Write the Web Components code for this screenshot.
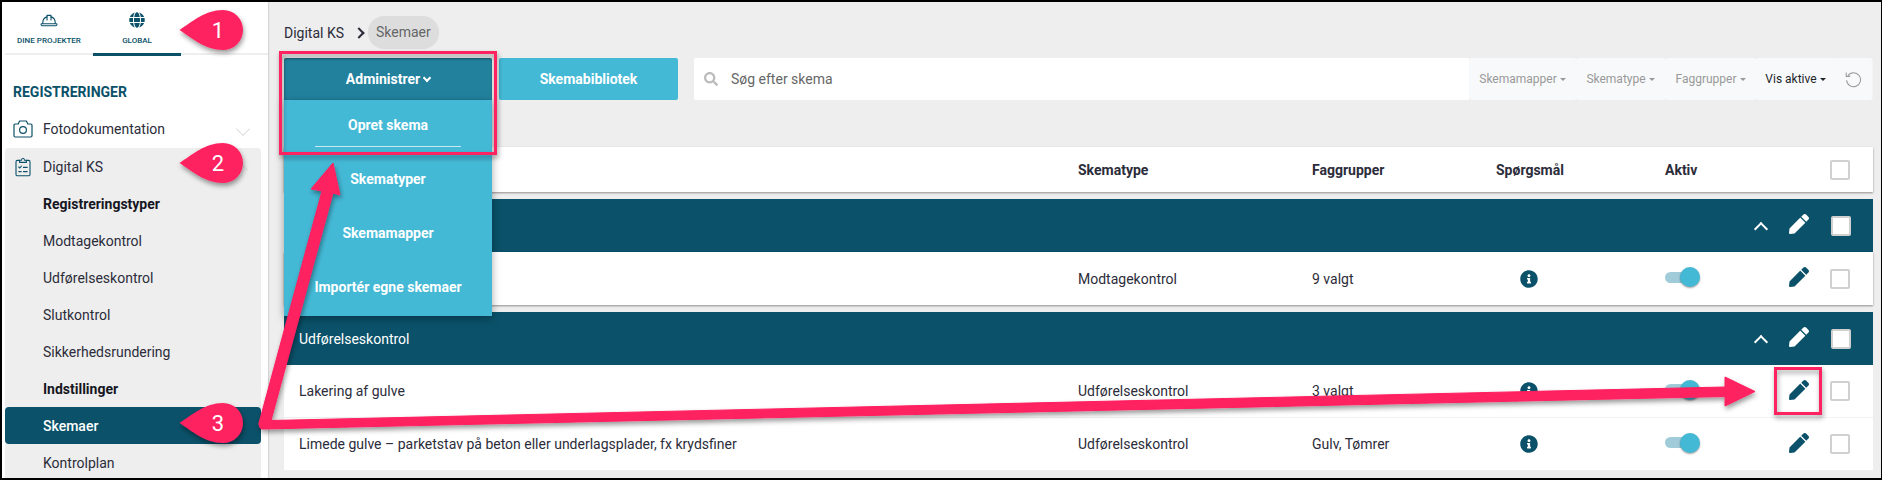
<!DOCTYPE html>
<html>
  <head>
    <meta charset="utf-8" />
    <style>
      html, body {
        margin: 0;
        height: 100%;
        overflow: hidden;
        font-family: Roboto, "Liberation Sans", sans-serif;
      }
    </style>
  </head>
  <body>
    <app-frame>
      <side-nav slot="side"></side-nav>
      <top-bar slot="main"></top-bar>
      <schema-table slot="main"></schema-table>
      <admin-menu slot="over"></admin-menu>
      <guide-marks slot="over"></guide-marks>
    </app-frame>

    <script>
      const ICONS = {
        pen: '<svg viewBox="0 0 512 512" width="20" height="20" fill="currentColor"><path d="M290.74 93.24l128.02 128.02-277.99 277.99-114.14 12.6C11.35 513.54-1.56 500.62.14 485.34l12.7-114.22 277.9-278.88zm207.2-19.06l-60.11-60.11c-18.75-18.75-49.16-18.75-67.91 0l-56.55 56.55 128.02 128.02 56.55-56.55c18.75-18.76 18.75-49.16 0-67.91z"/></svg>',
        info: '<svg viewBox="0 0 512 512" width="18" height="18" fill="currentColor"><path d="M256 8C119.043 8 8 119.083 8 256c0 136.997 111.043 248 248 248s248-111.003 248-248C504 119.083 392.957 8 256 8zm0 110c23.196 0 42 18.804 42 42s-18.804 42-42 42-42-18.804-42-42 18.804-42 42-42zm56 254c0 6.627-5.373 12-12 12h-88c-6.627 0-12-5.373-12-12v-24c0-6.627 5.373-12 12-12h12v-64h-12c-6.627 0-12-5.373-12-12v-24c0-6.627 5.373-12 12-12h64c6.627 0 12 5.373 12 12v100h12c6.627 0 12 5.373 12 12v24z"/></svg>',
        search: '<svg viewBox="0 0 512 512" width="14" height="14" fill="currentColor"><path d="M505 442.7L405.3 343c-4.5-4.5-10.6-7-17-7H372c27.6-35.3 44-79.7 44-128C416 93.1 322.9 0 208 0S0 93.1 0 208s93.1 208 208 208c48.3 0 92.7-16.4 128-44v16.3c0 6.4 2.5 12.5 7 17l99.7 99.7c9.4 9.4 24.6 9.4 33.9 0l28.3-28.3c9.4-9.4 9.4-24.6.1-34zM208 336c-70.7 0-128-57.2-128-128 0-70.7 57.2-128 128-128 70.7 0 128 57.2 128 128 0 70.7-57.2 128-128 128z"/></svg>',
        globe: '<svg viewBox="0 0 496 512" width="16" height="16" fill="currentColor"><path d="M336.5 160C322 70.7 287.8 8 248 8s-74 62.7-88.5 152h177zM152 256c0 22.2 1.2 43.5 3.3 64h185.3c2.1-20.5 3.3-41.8 3.3-64s-1.2-43.5-3.3-64H155.3c-2.1 20.5-3.3 41.8-3.3 64zm324.7-96c-28.6-67.9-86.5-120.4-158-141.6 24.4 33.8 41.2 84.7 50 141.6h108zM177.2 18.4C105.8 39.6 47.8 92.1 19.3 160h108c8.7-56.9 25.5-107.8 49.9-141.6zM487.4 192H372.7c2.1 21 3.3 42.5 3.3 64s-1.2 43-3.3 64h114.6c5.5-20.5 8.6-41.8 8.6-64s-3.1-43.5-8.5-64zM120 256c0-21.5 1.2-43 3.3-64H8.6C3.2 212.5 0 233.8 0 256s3.2 43.5 8.6 64h114.6c-2-21-3.2-42.5-3.2-64zm39.5 96c14.5 89.3 48.7 152 88.5 152s74-62.7 88.5-152h-177zm159.3 141.6c71.4-21.2 129.4-73.7 158-141.6h-108c-8.8 56.9-25.6 107.8-50 141.6zM19.3 352c28.6 67.9 86.5 120.4 158 141.6-24.4-33.8-41.2-84.7-50-141.6h-108z"/></svg>',
        helmet: '<svg viewBox="0 0 18 16" width="18" height="16" fill="none" stroke="currentColor" stroke-width="1.1" stroke-linecap="round" stroke-linejoin="round"><path d="M2.8 11.5V10.400C2.800 7.800 4.500 5.600 7 4.900M15.200 11.500V10.400c0-2.600-1.700-4.800-4.200-5.500"/><path d="M7 8V3.400h4V8"/><path d="M1.400 11.700h15.200c.5 0 .5 2-.6 2H2c-1.100 0-1.100-2-.6-2z"/></svg>',
        camera: '<svg viewBox="0 0 20 18" width="20" height="18" fill="none" stroke="currentColor" stroke-width="1.2" stroke-linejoin="round"><path d="M1 5.200c0-.7.5-1.200 1.200-1.200h3L6.600 1h6.800l1.400 3h3c.7 0 1.200.5 1.200 1.200v10.600c0 .7-.5 1.200-1.200 1.200H2.200c-.7 0-1.200-.5-1.200-1.200z"/><circle cx="10" cy="10" r="3.400"/></svg>',
        clipboard: '<svg viewBox="0 0 16 20" width="16" height="20" fill="none" stroke="currentColor" stroke-width="1.100" stroke-linejoin="round" stroke-linecap="round"><path d="M4.600 3.400H2.400c-.8 0-1.400.6-1.400 1.400v12.600c0 .8.600 1.400 1.400 1.400h11.200c.8 0 1.400-.6 1.400-1.400V4.800c0-.8-.6-1.400-1.400-1.400h-2.200"/><path d="M4.600 5.400V3.200h1.900C6.600 2 7.200 1.200 8 1.200s1.400.8 1.500 2h1.900v2.200z"/><path d="M3.800 10l1 1 1.600-1.800M8.400 10.400h3.800M3.800 14.600h2.400M8.400 14.600h3.800"/></svg>',
        reset: '<svg viewBox="0 0 18 18" width="17" height="17" fill="none" stroke="currentColor" stroke-width="1.100"><path d="M3.100 4.900A7.400 7.400 0 1 1 1.700 9.800"/><path d="M1.300 1.500v4.200h4.200" stroke-linejoin="miter"/></svg>'
      };

      class AppFrame extends HTMLElement {
        constructor() {
          super();
          this.attachShadow({ mode: "open" });
          this.shadowRoot.innerHTML = `
            <style>
              :host {
                display: block;
                position: relative;
                box-sizing: border-box;
                width: 1882px;
                height: 480px;
                border: solid #000;
                border-width: 2px 1px 2px 2px;
                overflow: hidden;
                background: #eeeeee;
              }
              .shell {
                display: grid;
                grid-template-columns: 266px 1fr;
                height: 100%;
              }
              .main {
                padding: 0 8px 0 16px;
                min-width: 0;
              }
            </style>
            <div class="shell">
              <slot name="side"></slot>
              <div class="main"><slot name="main"></slot></div>
            </div>
            <slot name="over"></slot>
          `;
        }
      }

      class SideNav extends HTMLElement {
        constructor() {
          super();
          this.attachShadow({ mode: "open" });
          this.shadowRoot.innerHTML = `
            <style>
              :host {
                display: block;
                background: #fff;
                color: #2c2c3a;
                font-size: 14px;
                overflow: hidden;
                box-shadow: 1px 0 1px rgba(0, 0, 0, 0.1);
              }
              .tabs {
                display: grid;
                grid-template-columns: 88px 88px;
                height: 51px;
                margin-left: 3px;
                border-bottom: 2px solid #eeeeee;
                color: #0a5169;
              }
              .tab {
                display: flex;
                flex-direction: column;
                align-items: center;
                padding-top: 10px;
                box-sizing: border-box;
                height: 54px;
                font-size: 8px;
                font-weight: 500;
              }
              .tab span { margin-top: 8px; }
              .tab svg { height: 16px; }
              .tab.on { border-bottom: 3px solid #0a5169; }
              h2 {
                margin: 27px 0 0 11px;
                font-size: 14px;
                line-height: 20px;
                font-weight: 700;
                color: #0a5169;
              }
              .head {
                display: flex;
                align-items: center;
                height: 37px;
                padding-left: 41px;
                position: relative;
              }
              .head svg:first-child {
                position: absolute;
                left: 11px;
                color: #0a5169;
              }
              .first { margin-top: 8px; margin-bottom: 1px; }
              .chev {
                position: absolute;
                left: 236px;
                top: 14px;
                width: 9px;
                height: 9px;
                border: solid #ddd;
                border-width: 0 1px 1px 0;
                transform: rotate(45deg);
              }
              .panel {
                margin: 0 7px 0 3px;
                background: #eeeeee;
                border-radius: 4px;
              }
              .panel .head { padding-left: 38px; }
              .panel .head svg:first-child { left: 10px; }
              .panel .chev { left: 231px; top: 17px; transform: rotate(225deg); }
              .item {
                display: flex;
                align-items: center;
                height: 37px;
                padding-left: 38px;
                border-radius: 4px;
              }
              .item.b { font-weight: 700; color: #16161f; }
              .item.on { background: #0a5169; color: #fff; font-weight: 500; }
            </style>
            <div class="tabs">
              <div class="tab">${ICONS.helmet}<span>DINE PROJEKTER</span></div>
              <div class="tab on">${ICONS.globe}<span>GLOBAL</span></div>
            </div>
            <h2>REGISTRERINGER</h2>
            <div class="head first">${ICONS.camera}Fotodokumentation<i class="chev"></i></div>
            <div class="panel">
              <div class="head">${ICONS.clipboard}Digital KS<i class="chev"></i></div>
              <div class="item b">Registreringstyper</div>
              <div class="item">Modtagekontrol</div>
              <div class="item">Udførelseskontrol</div>
              <div class="item">Slutkontrol</div>
              <div class="item">Sikkerhedsrundering</div>
              <div class="item b">Indstillinger</div>
              <div class="item on">Skemaer</div>
              <div class="item">Kontrolplan</div>
            </div>
          `;
        }
      }

      class TopBar extends HTMLElement {
        constructor() {
          super();
          this.attachShadow({ mode: "open" });
          this.shadowRoot.innerHTML = `
            <style>
              :host {
                display: block;
                color: #2c2c3a;
                font-size: 14px;
              }
              .crumbs {
                display: flex;
                align-items: center;
                height: 33px;
                padding-top: 14px;
              }
              .chev {
                width: 6px;
                height: 6px;
                margin: 0 5px 0 11px;
                border: solid #2c2c3a;
                border-width: 2px 2px 0 0;
                transform: rotate(45deg);
              }
              .pill {
                padding: 0 8px;
                line-height: 33px;
                border-radius: 16px;
                background: #dddddd;
                color: #666;
              }
              .tools {
                display: flex;
                height: 42px;
                margin-top: 9px;
              }
              .btn {
                display: flex;
                align-items: center;
                justify-content: center;
                height: 42px;
                border-radius: 2px;
                color: #fff;
                font-weight: 700;
                font-size: 14px;
                background: #44b9d6;
              }
              .library { width: 179px; margin-left: 215px; }
              .search {
                display: flex;
                align-items: center;
                gap: 13px;
                width: 765px;
                margin-left: 16px;
                padding-left: 10px;
                background: #fff;
                border-radius: 2px 0 0 2px;
                color: #bbb;
              }
              .search span { color: #666; }
              .filter {
                display: flex;
                align-items: center;
                justify-content: center;
                gap: 3px;
                background: #f8f9fa;
                color: #999;
                font-size: 12px;
                border-radius: 3px;
                box-shadow: 1px 0 0 #f2f3f4;
              }
              .filter i {
                border: solid transparent;
                border-width: 3px 3px 0;
                border-top-color: currentColor;
              }
              .filter.dark { color: #212529; }
              .reset { color: #999; border-radius: 0 3px 3px 0; }
            </style>
            <div class="crumbs">
              <span>Digital KS</span><i class="chev"></i><span class="pill">Skemaer</span>
            </div>
            <div class="tools">
              <div class="btn library">Skemabibliotek</div>
              <div class="search">${ICONS.search}<span>Søg efter skema</span></div>
              <div class="filter" style="width:107px">Skemamapper<i></i></div>
              <div class="filter" style="width:89px">Skematype<i></i></div>
              <div class="filter" style="width:91px">Faggrupper<i></i></div>
              <div class="filter dark" style="width:79px">Vis aktive<i></i></div>
              <div class="filter reset" style="width:37px">${ICONS.reset}</div>
            </div>
          `;
        }
      }

      class SchemaTable extends HTMLElement {
        constructor() {
          super();
          this.attachShadow({ mode: "open" });
          this.shadowRoot.innerHTML = `
            <style>
              :host {
                display: block;
                margin-top: 47px;
                color: #2c2c3a;
                font-size: 14px;
              }
              .row {
                display: grid;
                grid-template-columns: 779px 234px 184px 169px 124px 41px 20px;
                align-items: center;
                height: 53px;
                padding-left: 15px;
                background: #fff;
              }
              .row.top {
                height: 45px;
                font-weight: 700;
                margin-bottom: 7px;
                box-shadow: 0 1px 2px rgba(0, 0, 0, 0.4);
              }
              .row.last {
                margin-bottom: 7px;
                box-shadow: 0 1px 2px rgba(0, 0, 0, 0.4);
              }
              .row.line { border-bottom: 1px solid #f1f1f1; box-sizing: border-box; }
              .group { background: #0a5169; color: #fff; }
              .pen { color: #0a5169; height: 20px; margin-top: -3px; }
              .group .pen { color: #fff; }
              .info { color: #0a5169; margin-left: 24px; height: 18px; }
              .box {
                box-sizing: border-box;
                width: 20px;
                height: 20px;
                background: #fff;
                border: 2px solid #d0d0d0;
                border-radius: 2px;
              }
              .group .box { margin-left: 1px; }
              .updown {
                justify-self: end;
                width: 8px;
                height: 8px;
                margin: 6px 23px 0 0;
                border: solid #fff;
                border-width: 2px 0 0 2px;
                transform: rotate(45deg);
              }
              .switch {
                position: relative;
                width: 30px;
                height: 11px;
                margin-top: -3px;
                border-radius: 6px;
                background: #a0ccd9;
              }
              .switch::after {
                content: "";
                position: absolute;
                left: 15px;
                top: -4.5px;
                width: 20px;
                height: 20px;
                border-radius: 50%;
                background: #44b9d6;
                box-shadow: 0 1px 2px rgba(0, 0, 0, 0.4);
              }
            </style>
            <div class="row top">
              <span></span><span>Skematype</span><span>Faggrupper</span><span>Spørgsmål</span><span>Aktiv</span><span></span><i class="box"></i>
            </div>
            <div class="row group">
              <span></span><span></span><span></span><span></span><i class="updown"></i><span class="pen">${ICONS.pen}</span><i class="box"></i>
            </div>
            <div class="row last">
              <span></span><span>Modtagekontrol</span><span>9 valgt</span><span class="info">${ICONS.info}</span><i class="switch"></i><span class="pen">${ICONS.pen}</span><i class="box"></i>
            </div>
            <div class="row group">
              <span>Udførelseskontrol</span><span></span><span></span><span></span><i class="updown"></i><span class="pen">${ICONS.pen}</span><i class="box"></i>
            </div>
            <div class="row line">
              <span>Lakering af gulve</span><span>Udførelseskontrol</span><span>3 valgt</span><span class="info">${ICONS.info}</span><i class="switch"></i><span class="pen">${ICONS.pen}</span><i class="box"></i>
            </div>
            <div class="row line">
              <span>Limede gulve – parketstav på beton eller underlagsplader, fx krydsfiner</span><span>Udførelseskontrol</span><span>Gulv, Tømrer</span><span class="info">${ICONS.info}</span><i class="switch"></i><span class="pen">${ICONS.pen}</span><i class="box"></i>
            </div>
          `;
        }
      }

      // open dropdown, hangs over the table
      class AdminMenu extends HTMLElement {
        constructor() {
          super();
          this.attachShadow({ mode: "open" });
          this.shadowRoot.innerHTML = `
            <style>
              :host {
                display: block;
                position: absolute;
                left: 282px;
                top: 56px;
                width: 208px;
                color: #fff;
                font-size: 14px;
                font-weight: 700;
                text-align: center;
              }
              .title {
                display: flex;
                align-items: center;
                justify-content: center;
                gap: 4px;
                height: 42px;
                background: #22829e;
                border-radius: 2px 2px 0 0;
                box-shadow: inset 0 1px 2px rgba(0, 0, 0, 0.3);
              }
              .title i {
                width: 4px;
                height: 4px;
                margin-top: -3px;
                border: solid #fff;
                border-width: 0 2px 2px 0;
                transform: rotate(45deg);
              }
              .list {
                background: #44b9d6;
                box-shadow: 0 2px 8px rgba(0, 0, 0, 0.35);
              }
              .list div {
                height: 54px;
                line-height: 50px;
                box-sizing: border-box;
              }
              .list div:first-child { position: relative; }
              .list div:first-child::after {
                content: "";
                position: absolute;
                left: 31px;
                right: 31px;
                top: 46px;
                height: 1px;
                background: rgba(255, 255, 255, 0.7);
              }
            </style>
            <div class="title">Administrer<i></i></div>
            <div class="list">
              <div>Opret skema</div>
              <div>Skematyper</div>
              <div>Skemamapper</div>
              <div>Importér egne skemaer</div>
            </div>
          `;
        }
      }

      // pink arrows, frames and numbered callouts drawn over the screenshot
      class GuideMarks extends HTMLElement {
        constructor() {
          super();
          this.attachShadow({ mode: "open" });
          const drops = [[30, "1"], [163, "2"], [423, "3"]];
          this.shadowRoot.innerHTML = `
            <style>
              :host {
                display: block;
                position: absolute;
                left: -2px;
                top: -2px;
                width: 1882px;
                height: 480px;
                pointer-events: none;
              }
              svg { display: block; overflow: visible; }
              text {
                font: 400 22px Roboto, "Liberation Sans", sans-serif;
                fill: #fff;
                text-anchor: middle;
              }
            </style>
            <svg width="1882" height="480" viewBox="0 0 1882 480">
              <defs>
                <filter id="sh" x="-10%" y="-20%" width="120%" height="140%">
                  <feDropShadow dx="1" dy="3" stdDeviation="2.5" flood-color="#000" flood-opacity="0.4"/>
                </filter>
              </defs>
              <g filter="url(#sh)">
                <rect x="280.5" y="52.5" width="215" height="101" fill="none" stroke="#ff2060" stroke-width="3"/>
                <rect x="1775.5" y="368.5" width="45" height="45" fill="none" stroke="#ff2060" stroke-width="3"/>
                <path fill="#ff2060" stroke="#ff2060" stroke-linejoin="round" d="M271 420.500L1725 387V377L1755 391.500 1725 406V396.500L262 429C260 429 258.500 425 259 423L322 191 311 189 333 163 340 195 333 193z"/>
              </g>
              ${drops.map(([y, n]) => `
                <g filter="url(#sh)">
                  <path fill="#ff2060" d="M179.500 ${y}C192 ${y - 8} 205 ${y - 20} 223 ${y - 20}A20 20 0 0 1 223 ${y + 20}C205 ${y + 20} 192 ${y + 8} 179.500 ${y}z"/>
                </g>
                <text x="218" y="${y + 8}">${n}</text>`).join("")}
            </svg>
          `;
        }
      }

      customElements.define("app-frame", AppFrame);
      customElements.define("side-nav", SideNav);
      customElements.define("top-bar", TopBar);
      customElements.define("schema-table", SchemaTable);
      customElements.define("admin-menu", AdminMenu);
      customElements.define("guide-marks", GuideMarks);
    </script>
  </body>
</html>
